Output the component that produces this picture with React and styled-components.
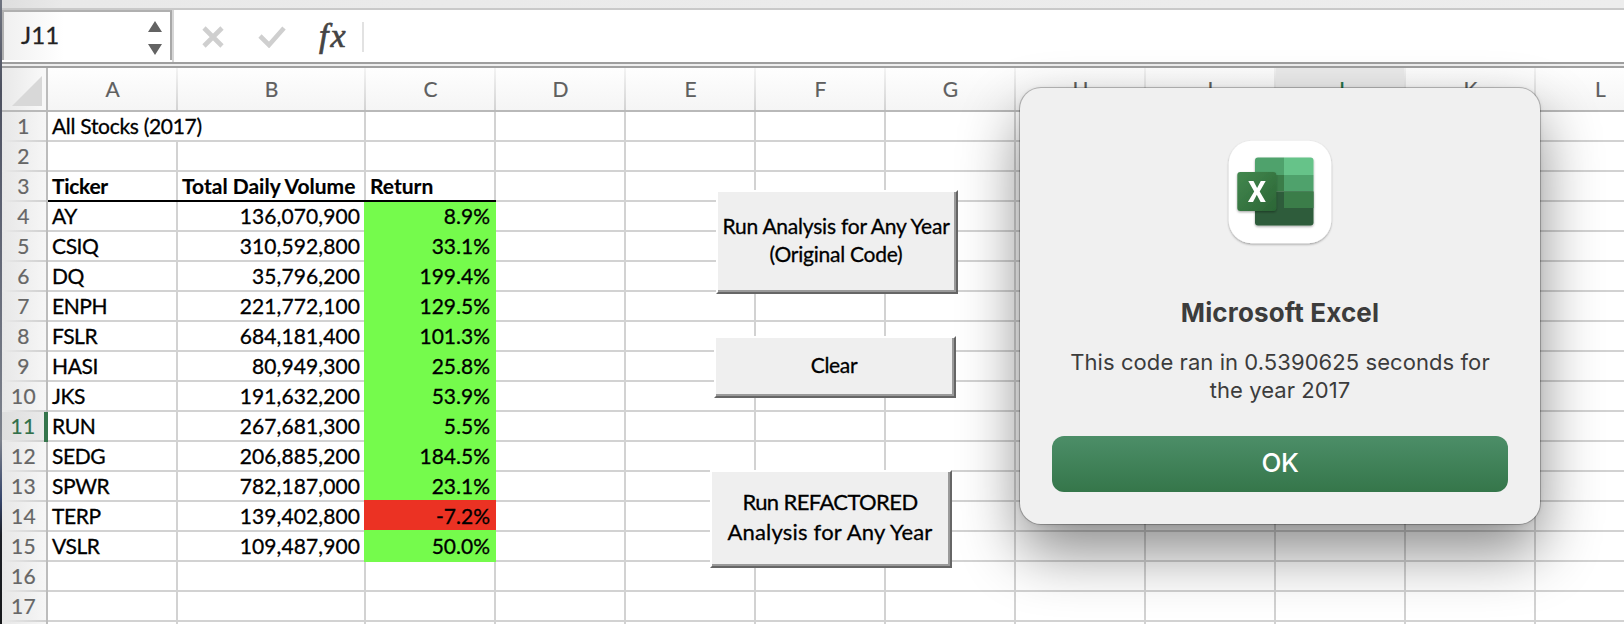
import React from 'react';
import styled, { createGlobalStyle, css } from 'styled-components';

const Global = createGlobalStyle`
  * { box-sizing: border-box; }
  body { margin: 0; background: #fff; overflow: hidden; }
`;

const sheetFont = css`
  font-family: Lato, "Open Sans", sans-serif;
  font-kerning: normal;
`;

const Window = styled.main`
  position: relative;
  width: 1624px;
  height: 624px;
  overflow: hidden;
  padding-left: 2px;
  background: linear-gradient(#6f7480 0, #4d5160 90px, #5b6070 200px, #7d828c 440px, #35456b 500px, #1c1f26 535px, #15171a);
  ${sheetFont}
`;

const Ribbon = styled.div`
  height: 10px;
  background: linear-gradient(90deg, #dedede, #e9e9e9 60px, #ededed);
  border-bottom: 2px solid #c9c9c9;
`;

const FormulaBar = styled.div`
  display: flex;
  height: 54px;
  background: #fff;
  border-bottom: 2px solid #9e9e9e;
`;

const NameBox = styled.div`
  display: flex;
  align-items: center;
  justify-content: space-between;
  width: 170px;
  height: 50px;
  padding: 0 8px 0 17px;
  border: 2px solid #b0b0b0;
  border-bottom: 0;
  border-right-color: #a8a8a8;
  background: linear-gradient(90deg, #f0f0f0, #fff 60px);
  font-size: 24px;
  line-height: 46px;
  color: #222;
  -webkit-text-stroke: 0.3px #222;

  svg { margin-top: 3px; }
`;

const CellReference = styled.span`
  padding-bottom: 3px;
  letter-spacing: 0.1px;
`;

const Steppers = styled.svg`
  width: 14px;
  height: 34px;
  fill: #636363;
`;

const FormulaTools = styled.div`
  display: flex;
  align-items: center;
  flex: 1;
  padding: 2px 0 0 28px;
  border-left: 2px solid #d6d6d6;
`;

const ToolIcon = styled.svg`
  width: ${(p) => p.$w}px;
  height: 22px;
  margin-right: ${(p) => p.$gap}px;
  fill: none;
  stroke: #cfcfcf;
  stroke-width: 4.6;
`;

const Fx = styled.span`
  width: 30px;
  padding-bottom: 3px;
  font: italic 34px/40px "Liberation Serif", serif;
  letter-spacing: 2px;
  color: #444;
  -webkit-text-stroke: 0.7px #444;
`;

const BarDivider = styled.i`
  width: 2px;
  height: 30px;
  margin-left: 13px;
  background: #e2e2e2;
`;

const Seam = styled.div`
  height: 4px;
  background: #eee;
  border-bottom: 2px solid #a0a0a0;
`;

const columns = '46px 130px 188px 130px repeat(9, 130px)';

const HeaderRow = styled.div`
  display: grid;
  grid-template-columns: ${columns};
  height: 44px;
  background: linear-gradient(#fefefe, #f5f5f5);
  border-bottom: 2px solid #b9b9b9;
`;

const Corner = styled.div`
  display: flex;
  align-items: flex-end;
  justify-content: flex-end;
  padding: 0 4px 4px 0;
  border-right: 2px solid #bcbcbc;
  background: linear-gradient(90deg, #e8e8e8, #f8f8f8 40px);

  svg { width: 30px; height: 30px; fill: #d8d8d8; }
`;

const ColumnHead = styled.div`
  padding-left: 1px;
  border-right: 2px solid;
  border-image: linear-gradient(#f4f4f4, #d2d2d2) 1;
  background: ${(p) => (p.$active ? '#ebebeb' : 'transparent')};
  color: ${(p) => (p.$active ? '#217346' : '#5f5f5f')};
  font-size: 21px;
  line-height: 41px;
  text-align: center;
  -webkit-text-stroke: 0.2px;
`;

const Row = styled.div`
  display: grid;
  grid-template-columns: ${columns};
  grid-auto-rows: 30px;
  background: #fff;
`;

const RowHead = styled.div`
  border-right: ${(p) => (p.$active ? '4px solid #35754c' : '2px solid #bcbcbc')};
  background:
    linear-gradient(90deg, #e9e9e9, #d0d0d0) bottom / 100% 2px no-repeat,
    linear-gradient(90deg, ${(p) => (p.$active ? '#dedede, #e9e9e9' : '#e7e7e7, #f6f6f6')});
  color: ${(p) => (p.$active ? '#31704a' : '#666')};
  font-size: 21px;
  line-height: 28px;
  letter-spacing: 0.2px;
  padding-right: ${(p) => (p.$active ? 0 : 1)}px;
  text-align: center;
  -webkit-text-stroke: 0.2px;
`;

const fills = { green: '#75fb4c', red: '#eb3223' };

const Cell = styled.div`
  position: relative;
  border-right: 2px solid #d2d2d2;
  border-bottom: 2px solid #d2d2d2;
  padding: 0 4px;
  color: #000;
  font-size: 21px;
  line-height: 28px;
  white-space: nowrap;
  text-align: ${(p) => (p.$number ? 'right' : 'left')};
  font-weight: ${(p) => (p.$bold ? 700 : 400)};
  letter-spacing: ${(p) => p.$track || 0}px;
  -webkit-text-stroke: ${(p) => (p.$bold ? 0.15 : 0.3)}px #000;
  ${(p) => p.$spill && 'border-right: 0;'}
  ${(p) =>
    p.$rule &&
    css`
      z-index: 1;
      border: 0;
      background:
        linear-gradient(#000, #000) bottom / 100% 2px no-repeat,
        linear-gradient(#d2d2d2, #d2d2d2) right / 2px 100% no-repeat;
    `}
  ${(p) =>
    p.$fill &&
    css`
      margin: -2px 0 0 -2px;
      padding-top: 2px;
      background: ${fills[p.$fill]};
      border-color: ${fills[p.$fill]};
    `}
`;

const MacroButton = styled.button`
  position: absolute;
  left: ${(p) => p.$x}px;
  top: ${(p) => p.$y}px;
  width: 242px;
  height: ${(p) => p.$h}px;
  display: flex;
  flex-direction: column;
  align-items: center;
  justify-content: center;
  padding: 0 2px 5px 0;
  border: 2px solid;
  border-color: #fff #666 #666 #fff;
  background: #efefef;
  box-shadow: inset -2px -2px #9a9a9a;
  color: #000;
  ${sheetFont}
  font-size: ${(p) => p.$size || 21}px;
  line-height: ${(p) => p.$line || 28}px;
  -webkit-text-stroke: 0.3px #000;
  white-space: nowrap;
`;

const Caption = styled.span`
  letter-spacing: ${(p) => p.$track}px;
`;

const Dialog = styled.section`
  position: absolute;
  left: 1020px;
  top: 88px;
  width: 520px;
  height: 436px;
  padding: 52px 32px 32px;
  display: flex;
  flex-direction: column;
  align-items: center;
  border-radius: 21px;
  background: #f0f0f0;
  box-shadow: 0 0 0 1px rgba(0, 0, 0, 0.22), 0 0 4px rgba(0, 0, 0, 0.12), 0 28px 60px rgba(0, 0, 0, 0.46);
  color: #3c3c3c;
  font-family: Inter, sans-serif;
  text-align: center;
`;

const AppIcon = styled.svg`
  width: 104px;
  height: 104px;
  overflow: visible;
`;

const Title = styled.h1`
  margin: 53px 0 0;
  font-size: 26px;
  line-height: 32px;
  font-weight: 700;
  letter-spacing: 0.15px;
`;

const Message = styled.p`
  margin: 19px 0 0;
  font-size: 22px;
  line-height: 28px;
  letter-spacing: 0.07px;
`;

const OkButton = styled.button`
  width: 456px;
  height: 56px;
  margin-top: auto;
  padding: 0 0 2px;
  border: 0;
  border-radius: 12px;
  background: linear-gradient(#4c8e68, #35764a);
  color: #fff;
  font: 500 26px/54px Inter, sans-serif;
  letter-spacing: -0.4px;
`;

const stocks = [
  ['AY', '136,070,900', '8.9%'],
  ['CSIQ', '310,592,800', '33.1%'],
  ['DQ', '35,796,200', '199.4%'],
  ['ENPH', '221,772,100', '129.5%'],
  ['FSLR', '684,181,400', '101.3%'],
  ['HASI', '80,949,300', '25.8%'],
  ['JKS', '191,632,200', '53.9%'],
  ['RUN', '267,681,300', '5.5%'],
  ['SEDG', '206,885,200', '184.5%'],
  ['SPWR', '782,187,000', '23.1%'],
  ['TERP', '139,402,800', '-7.2%'],
  ['VSLR', '109,487,900', '50.0%'],
];

function cellsFor(row) {
  if (row === 1)
    return (
      <>
        <Cell $spill $track={-0.3}>All Stocks (2017)</Cell>
        <Cell />
        <Cell />
      </>
    );
  if (row === 3)
    return (
      <>
        <Cell $bold $rule $track={-0.3}>Ticker</Cell>
        <Cell $bold $rule>Total Daily Volume</Cell>
        <Cell $bold $rule>Return</Cell>
      </>
    );
  const stock = stocks[row - 4];
  if (!stock)
    return (
      <>
        <Cell />
        <Cell />
        <Cell />
      </>
    );
  const [ticker, volume, change] = stock;
  return (
    <>
      <Cell $track={-0.4}>{ticker}</Cell>
      <Cell $number $track={0.1}>{volume}</Cell>
      <Cell $number $fill={change.startsWith('-') ? 'red' : 'green'}>{change}</Cell>
    </>
  );
}

function ExcelIcon() {
  return (
    <AppIcon viewBox="0 0 104 104">
      <defs>
        <linearGradient id="tile" x1="0" y1="0" x2="1" y2="1">
          <stop offset="0" stopColor="#43884f" />
          <stop offset="1" stopColor="#2b6535" />
        </linearGradient>
        <filter id="soft" x="-20%" y="-20%" width="140%" height="150%">
          <feDropShadow dx="0" dy="1.2" stdDeviation="1.2" floodOpacity="0.35" />
        </filter>
        <clipPath id="book"><rect x="27" y="17.5" width="58.5" height="68" rx="3" /></clipPath>
      </defs>
      <rect x="0.7" y="0.7" width="102.6" height="102.6" rx="23" fill="#fff" filter="url(#soft)" />
      <g filter="url(#soft)">
        <g clipPath="url(#book)">
          <path fill="#50a26c" d="M27 17h29v18H27z" />
          <path fill="#66c389" d="M56 17h30v18H56z" />
          <path fill="#3b7d49" d="M27 35h29v16.5H27z" />
          <path fill="#50a26c" d="M56 35h30v16.5H56z" />
          <path fill="#2e5c3b" d="M27 51.5h59V86H27z" />
          <path fill="#3b7d49" d="M56 51.5h30V68H56z" />
        </g>
      </g>
      <rect x="9.3" y="32" width="39" height="39" rx="3" fill="url(#tile)" filter="url(#soft)" />
      <path fill="#fff" d="M20.3 41h5.2l3.6 7 3.7-7h4.9l-6 10.5 6.1 10.5h-5.200l-3.800-7.300-3.800 7.300h-5.100l6.300-10.500z" />
    </AppIcon>
  );
}

export default function App() {
  return (
    <Window>
      <Global />
      <Ribbon />
      <FormulaBar>
        <NameBox>
          <CellReference>J11</CellReference>
          <Steppers viewBox="0 0 14 34">
            <path d="M7 0l7 11H0zM7 34L0 23h14z" />
          </Steppers>
        </NameBox>
        <FormulaTools>
          <ToolIcon $w={22} $gap={34} viewBox="0 0 22 22">
            <path d="M2 2l18 18M20 2L2 20" />
          </ToolIcon>
          <ToolIcon $w={28} $gap={33} viewBox="0 0 28 22">
            <path d="M2 10l9 9L26 2" />
          </ToolIcon>
          <Fx>fx</Fx>
          <BarDivider />
        </FormulaTools>
      </FormulaBar>
      <Seam />
      <HeaderRow>
        <Corner><svg viewBox="0 0 30 30"><path d="M30 0v30H0z" /></svg></Corner>
        {[...'ABCDEFGHIJKL'].map((name) => (
          <ColumnHead key={name} $active={name === 'J'}>{name}</ColumnHead>
        ))}
      </HeaderRow>
      {Array.from({ length: 18 }, (_, i) => i + 1).map((row) => (
        <Row key={row}>
          <RowHead $active={row === 11}>{row < 18 ? row : ''}</RowHead>
          {cellsFor(row)}
          {[...'DEFGHIJKL'].map((name) => <Cell key={name} />)}
        </Row>
      ))}
      <MacroButton $x={716} $y={190} $h={104}>
        <Caption $track={-0.22}>Run Analysis for Any Year</Caption>
        <Caption $track={-0.25}>(Original Code)</Caption>
      </MacroButton>
      <MacroButton $x={714} $y={336} $h={62}>
        <Caption $track={-0.3}>Clear</Caption>
      </MacroButton>
      <MacroButton $x={710} $y={470} $h={98} $line={30} $size={22}>
        <Caption $track={-0.6}>Run REFACTORED</Caption>
        <Caption $track={0.2}>Analysis for Any Year</Caption>
      </MacroButton>
      <Dialog>
        <ExcelIcon />
        <Title>Microsoft Excel</Title>
        <Message>This code ran in 0.5390625 seconds for<br />the year 2017</Message>
        <OkButton>OK</OkButton>
      </Dialog>
    </Window>
  );
}
